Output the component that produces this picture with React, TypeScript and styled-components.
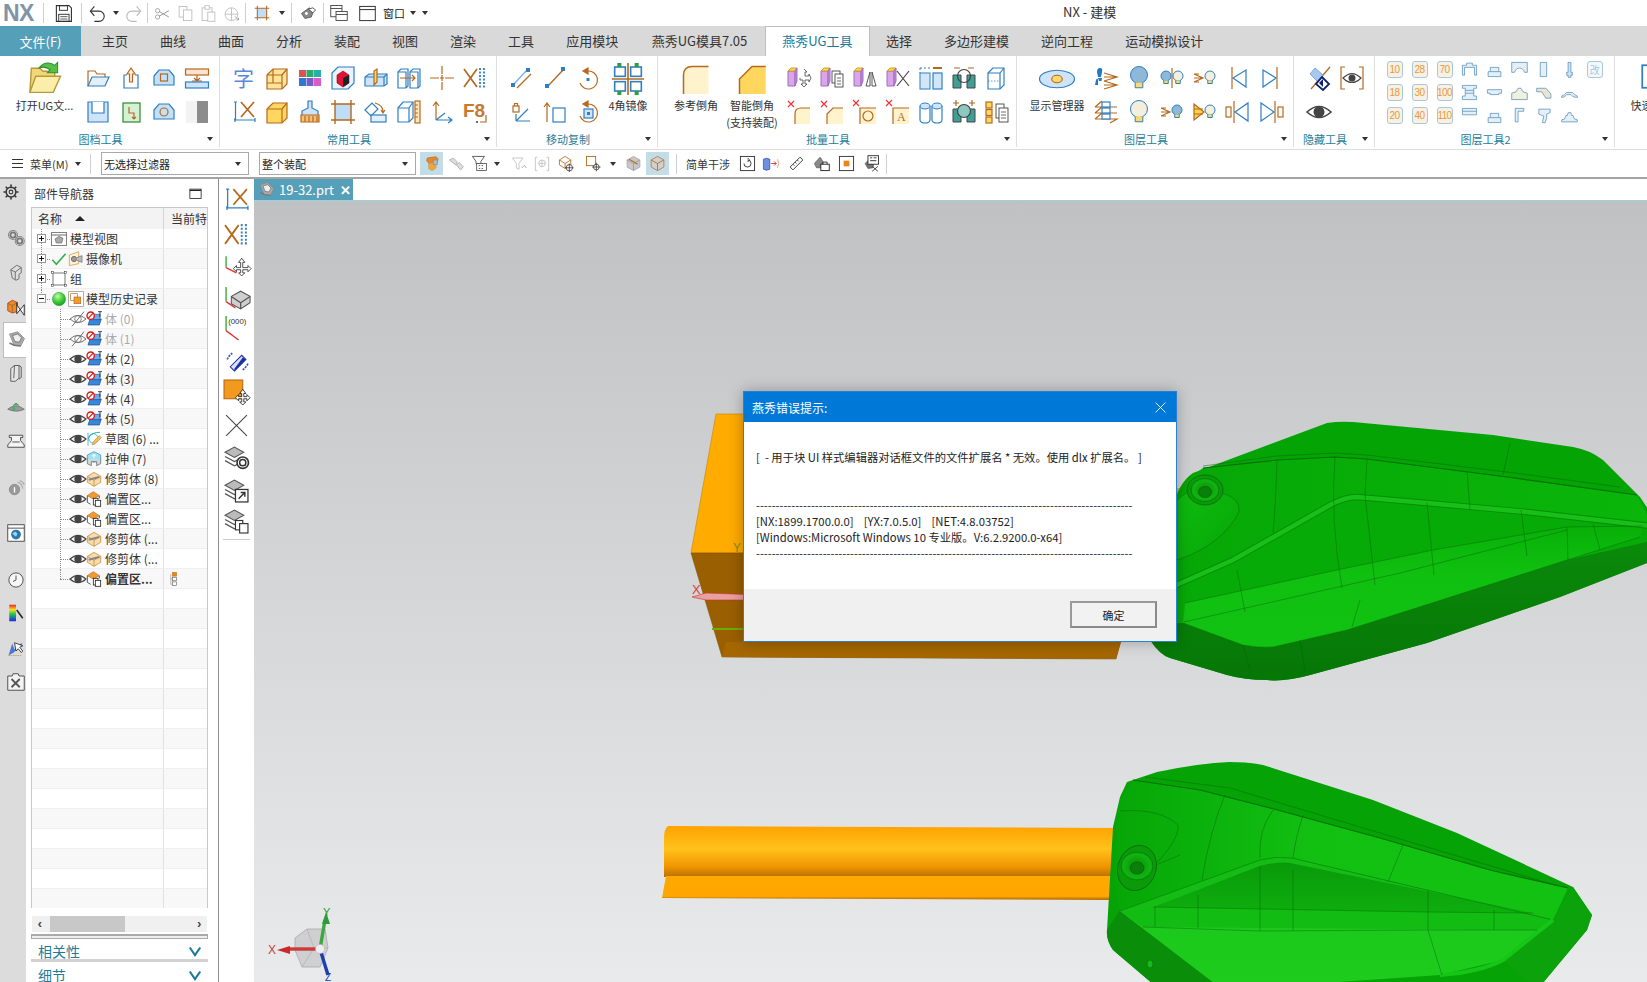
import React from "react";
import styled, { createGlobalStyle } from "styled-components";

const Global = createGlobalStyle`
  html, body { margin: 0; padding: 0; background: #fff; overflow: hidden; }
  * { box-sizing: border-box; }
  body { font-family: "Noto Sans CJK SC", "Liberation Sans", sans-serif; color: #333; }
`;

const B = "#2f7fc1", L = "#cfe4f8", O = "#b5691f", Y = "#ffd966", K = "#444", T = "#3f9f95", Pu = "#d9a6e8", GR = "#9a9a9a";
const P = (d: string, s: string = "none", f: string = "none", w: number = 1.2, dash?: string) => (
  <path d={d} stroke={s} fill={f} strokeWidth={w} strokeDasharray={dash} />
);
const C = (x: number, y: number, r: number, s: string = "none", f: string = "none", w: number = 1.2) => (
  <circle cx={x} cy={y} r={r} stroke={s} fill={f} strokeWidth={w} />
);
const Re = (x: number, y: number, w: number, h: number, s: string = "none", f: string = "none", sw: number = 1.2) => (
  <rect x={x} y={y} width={w} height={h} stroke={s} fill={f} strokeWidth={sw} />
);
const bulb = (x: number, y: number, r: number, f: string) => (
  <>
    {C(x, y, r, B, f, 1)}
    {P(`M${x - r * 0.45} ${y + r * 0.9}V${y + r * 1.5}h${r * 0.9}V${y + r * 0.9}`, B, Y, 1)}
  </>
);
const arrows3 = P("M1 8l9 4-9 4M1 12h9M1 8h5M1 16h5", O);
const purple = (
  <>
    {P("M1 5h7v15H1z", "#a06cc0", Pu, 1)}
    {P("M1 5l3-3h6l-2 3z", "#c9a227", "#ffd94a", 1)}
    {P("M8 5l2-3v13l-2 5z", "#a06cc0", "#c78fdc", 1)}
  </>
);
const xm = (x: number, y: number) => P(`M${x} ${y}l6 6m0-6l-6 6`, "#e33", "none", 1.2);
const profile = (d: string, f: string = "#e4eff8") => P(d, "#5a93bf", f, 1.1);

const ICONS: Record<string, React.ReactNode> = {
  bigOpen: <>
    {P("M3 5h6l2 2h8v4H7L2 21z", "#b89a3a", "#f0d878", 1)}
    {P("M6 10.5h17l-5 11H2z", "#b89a3a", "#fbeeaa", 1)}
    {P("M8 5Q13 -1 19 3l2-2v7h-7l2-2Q12 3 8 5z", "#2c8f2c", "#56bf45", 0.7)}
  </>,
  folderOpen: <>{P("M2 20V5h7l2 3h8v3", O)}{P("M2 20l4-9h17l-4 9z", B, "#e3f0fb")}</>,
  upload: <>{P("M8 9H5v13h14V9h-3", B)}{P("M12 2l4 6h-2.5v8h-3V8H8z", O, "#fdeedd")}</>,
  camBox: <>{P("M2 10l5-6h10l5 6v9H2z", B, "#c4e0f7")}{Re(8.5, 8, 7, 7, O)}</>,
  drawer: <>{Re(0.5, 3, 23, 6, O, "#fae3cf")}{P("M12 9v6M9 12l3 3 3-3M7 15h10", O)}{Re(0.5, 16, 23, 6, B, L)}</>,
  save: <>{P("M2 2h20v20H2z", B, L)}{P("M6 2v11h12V2", B, "#fff")}</>,
  step: <>{Re(4, 3, 17, 19, "#2b8a2b", "#d6f0d6")}{P("M10 7v6h5v6m-2-2l2 2 2-2", O)}</>,
  camera: <>{P("M2 10l5-6h10l5 6v9H2z", B, "#c4e0f7")}{C(12, 12, 4, O)}</>,
  grayBar: <>{Re(1, 1, 11, 22, "none", "#f3f3f3")}{Re(12, 1, 11, 22, "none", "#8c8c8c")}</>,
  zi: <text x="1" y="20" fontSize="21" fill="#5b86e0" fontFamily="Noto Sans CJK SC">字</text>,
  boxWire: <>{P("M2 9l6-6h14v15l-5 5H2z", O, "#ffe49a")}{P("M2 9h15v14M17 9l5-6M8 3v14H2M8 17l9 0", O)}</>,
  colors: <>{Re(1, 4, 7, 7, "none", "#d9534f")}{Re(8.5, 4, 7, 7, "none", "#2ea86b")}{Re(16, 4, 7, 7, "none", "#28b0a8")}{Re(1, 12, 7, 8, "none", "#2f78d6")}{Re(8.5, 12, 7, 8, "none", "#7a5cc9")}{Re(16, 12, 7, 8, "none", "#d85cc8")}</>,
  redCube: <>{P("M1 7l6-6h16v16l-6 6H1z", B, "#e8f3fc")}{P("M6 9l6-4 6 4v8l-6 4-6-4z", "#900", "#e0123a", 0.6)}{P("M12 12v9l6-4V9z", "none", "#222")}</>,
  slice: <>{P("M1 11l4-3h18v10l-3 2H1z", B, L)}{P("M1 11h19v9M20 11l3-3", B)}{P("M10 5l3-2v13l-3 3z", O, Y)}</>,
  pushBoxes: <>{P("M1 6l3-3h7v17l-2 2H1z", B, "#fff")}{P("M13 6l3-3h7v17l-2 2h-8z", B, "#fff")}{P("M1 6h8v16M13 6h8v16", B)}{P("M3 12h15m-3-3l3 3-3 3", O)}</>,
  crossH: <>{P("M0 12h9M15 12h9M12 0v8M12 16v8M12 9v6M10 12h4", O)}</>,
  xDots: <>{P("M1 3l13 18M14 3L1 21", O, "none", 1.7)}{P("M17 2v20M21 2v20", B, "none", 1.8, "2 1.5")}</>,
  dimX: <>{P("M2 2h3M3.5 2v18M2 20h21M23 18v4M3 18v4", B)}{P("M9 2l13 15M22 2L9 17", O, "none", 1.7)}</>,
  yCube: <>{P("M2 9l6-6h14v15l-5 5H2z", O, "#ffd75e")}{P("M2 9h15v14M17 9l5-6", O)}</>,
  brush: <>{P("M10 1h4v7l6 3v5H4v-5l6-3z", B, L)}{P("M3 15h18v7H3z", O, "#f3c27a")}{P("M7 16v6M11 16v6M15 16v6M19 16v6", O)}</>,
  crop: <>{Re(4, 4, 16, 16, "none", "#bfdcf8")}{P("M0 4h24M0 20h24M4 0v24M20 0v24", O, "none", 1.4)}</>,
  rot: <>{P("M1 10l7-7 6 6-7 7z", B, "#fff")}{P("M11 3q8 2 8 9m-2-2l2 3 2-3", O)}{Re(7, 15, 15, 7, B, "#e3f0fb")}</>,
  ruler: <>{P("M1 8l5-6h10v16l-4 4H1z", B, "#fff")}{P("M1 8h11v14M12 8l4-6", B)}{Re(18, 1, 5, 22, O, "#ffe8bd")}{P("M18 5h3M18 9h3M18 13h3M18 17h3", O)}</>,
  axes: <>{P("M6 3v17M3 6l3-4 3 4", O)}{P("M6 20L21 20M18 17l4 3-4 3M6 20l9-7", B)}</>,
  f8: <><text x="0" y="17" fontSize="19" fontWeight="700" fill="#c67a2c" fontFamily="Liberation Sans">F8</text>{P("M23 15v7h-6", O)}{P("M13 21l2 2m0-2l-2 2", K, "none", 0.8)}</>,
  lineB: <>{P("M3 19L17 4", "#7db8ea", "none", 1.6)}{P("M7 22L21 8", O, "none", 1.3)}{Re(1, 17, 4, 4, "none", B)}{Re(16, 2, 4, 4, "none", B)}</>,
  lineO: <>{P("M4 21L20 4", O, "none", 1.4)}{Re(2, 18, 4, 4, "none", B)}{Re(18, 1, 4, 4, "none", B)}</>,
  rotDot: <>{P("M12 5a9 9 0 1 1-8 12", O)}{P("M12 2v6l-5-3z", O, O)}{Re(10.5, 12, 3, 3, "none", B)}</>,
  lockAx: <>{P("M6 21L20 21M6 21V14M6 21l12-12", B)}{Re(3, 6, 6, 6, O)}{P("M4.5 6V3.5h3V6", O)}</>,
  upBox: <>{P("M4 22V3M1 7l3-4 3 4", O)}{Re(10, 8, 12, 14, B)}</>,
  rotSq: <>{P("M12 4a9 9 0 1 1-8 12", O)}{P("M12 1v6l-5-3z", O, O)}{Re(8, 9, 9, 9, B, L)}{Re(11, 12, 3, 3, "none", B)}</>,
  mirror4: <>{P("M12 0v24M0 12h24", O)}{Re(2, 3, 8, 7, B, "#fff")}{Re(14, 3, 8, 7, B, "#fff")}{Re(2, 14, 8, 7, B, "#fff")}{Re(14, 14, 8, 7, B, "#fff")}{Re(4, 0, 3, 3, "none", "#2c9c40")}{Re(17, 0, 3, 3, "none", "#2c9c40")}{Re(4, 21, 3, 3, "none", "#2c9c40")}{Re(17, 21, 3, 3, "none", "#2c9c40")}</>,
  fillet: <>{P("M2 24V9Q2 2 9 2H22V24z", "none", "#fff3cd")}{P("M2 24V9Q2 2 9 2H22", O)}</>,
  chamfer: <>{P("M2 24V12L12 2H23V24z", "none", "#ffd75e")}{P("M2 24V12L12 2H23", O)}</>,
  pMove: <>{purple}{P("M17 3l3 3h-2v4h4V8l2 4-2 4v-2h-4v4h2l-3 3-3-3h2v-4h-3v-2", K, "#fff", 0.8)}</>,
  pCopy: <>{purple}{Re(12, 5, 8, 12, K, "#fff", 0.9)}{Re(15, 8, 8, 13, K, "#fff", 0.9)}{P("M17 12h4M17 15h4M17 18h4", K, "none", 0.8)}</>,
  pMir: <>{purple}{P("M13 20l4-14v14zM23 20l-4-14v14z", K, "#fff", 0.9)}</>,
  pX: <>{purple}{P("M11 5l12 15M23 5L11 20", K, "none", 1.2)}</>,
  cols: <>{Re(1, 7, 10, 16, "#4b93cf", "#d3e6f7")}{Re(14, 7, 9, 16, B, "#d3e6f7")}{P("M1 2h10", B, "none", 1, "2 2")}{P("M1 2v5", B, "none", 1, "2 2")}{P("M14 2h9", O, "none", 2)}</>,
  gate: <>{P("M1 9h8v13H1zM15 9h8v13h-8z", K, T, 1)}{C(12, 10, 6.5, K, "none", 1.2)}{P("M2 2h6M16 2h6", O)}</>,
  dotBox: <>{P("M3 7l5-5h11v17l-4 4H3z", B, "#fff")}{P("M3 7h12v16M15 7l4-5", B)}{P("M3 15h12", B, "none", 0.8, "1.5 1.5")}</>,
  xFil: <>{xm(1, 1)}{P("M8 24V14q0-6 6-6h9v16z", "none", "#fff3cd")}{P("M8 24V14q0-6 6-6h9", O)}</>,
  xFil2: <>{xm(1, 1)}{P("M7 24V14l6-6h10v16z", "none", "#fff3cd")}{P("M7 24V14l6-6h10", O)}</>,
  xCir: <>{xm(0, 0)}{P("M7 24V8h16v16z", "none", "#fff3cd")}{P("M7 24V8h16", O)}{C(15, 16, 5, O)}</>,
  xA: <>{xm(0, 0)}{P("M7 24V8h16v16z", "none", "#fff3cd")}{P("M7 24V8h16", O)}<text x="11" y="21" fontSize="12" fill={O} fontFamily="Liberation Serif">A</text></>,
  cyl: <>{P("M1 6v14a5 3 0 0 0 10 0V6", B)}{P("M13 6v14a5 3 0 0 0 10 0V6", B)}<ellipse cx="6" cy="6" rx="5" ry="3" stroke={B} fill={L} /><ellipse cx="18" cy="6" rx="5" ry="3" stroke={B} fill={L} /></>,
  gate2: <>{P("M1 9h8v13H1zM15 9h8v13h-8z", K, T, 1)}{C(12, 11, 6.5, K, "#8cc8be", 1.2)}{P("M1 3h6M4 0v6M17 3h6M20 0v6", O)}</>,
  oCopy: <>{Re(1, 2, 6, 6, O, Y)}{Re(1, 9.5, 6, 6, O, Y)}{Re(1, 17, 6, 6, O, Y)}{Re(11, 4, 8, 14, K, "#fff", 0.9)}{Re(14, 8, 9, 14, K, "#fff", 0.9)}{P("M16 12h5M16 15h5M16 18h5", K, "none", 0.8)}</>,
  disp: <><ellipse cx="12" cy="12" rx="15" ry="7.5" stroke={B} fill={L} /><ellipse cx="12" cy="12" rx="4.5" ry="3.2" stroke={O} fill={Y} /></>,
  feet: <>{P("M6 2q3 0 2 4l-1 5H4l-1-5q0-4 3-4zM4 12h4l-.5 3H5z M2 14q1-2 2-1v6H1z", "none", "#1f78c8")}{P("M10 7l13 4-13 4M10 11h13M10 15l13 4-13 4M10 19h12", O)}</>,
  bB: bulb(12, 9, 8.5, "#8fb8d8"),
  bW: bulb(12, 9, 8.5, "#f3efdc"),
  bSplit: <>{bulb(6, 10, 5, "#8fb8d8")}{P("M12 2v20", O)}{bulb(18, 10, 5, "#f3efdc")}</>,
  aBW: <>{arrows3}{bulb(17, 10, 5, "#f3efdc")}</>,
  aBB: <>{arrows3}{bulb(17, 10, 5, "#8fb8d8")}</>,
  aYB: <>{P("M1 4l10 8-10 8z", O, "#ffd24d")}{P("M1 9h9M1 14h9", O)}{bulb(17, 10, 5, "#f3efdc")}</>,
  triL: <>{P("M6 1v22", O)}{P("M20 4v17L7 12z", B, "#fff")}</>,
  triR: <>{P("M18 1v22", O)}{P("M4 4v17l13-9z", B, "#fff")}</>,
  layers: <>{P("M1 7l7-6M23 7H1M1 13h22M1 19h22l-7 4M1 19l7-6M1 13l7-6", O)}{Re(8, 2, 8, 5, B, "#fff")}{Re(8, 8, 8, 5, B, "#fff")}{Re(8, 14, 8, 5, B, "#fff")}</>,
  rtriL: <>{Re(0, 7, 5, 10, O, "#fff")}{P("M8 1v22", O)}{P("M22 3v18L9 12z", B, "#fff")}</>,
  rtriR: <>{Re(19, 7, 5, 10, O, "#fff")}{P("M16 1v22", O)}{P("M2 3v18l13-9z", B, "#fff")}</>,
  hideD: <>{P("M4 23L23 1", O, "none", 1.3)}{P("M8 2l8 7-6 6-7-7z", "#7fa7e0", "#a9c6ef", 1)}{P("M15 11l7 7-6 6-7-6z", "#10206b", "#fff", 1.8)}{P("M16 13v8l-4-4z", "none", "#10206b")}</>,
  eyeBr: <>{P("M5 1H1v22h4M19 1h4v22h-4", O)}{P("M3 12q9-9 18 0q-9 9-18 0z", K, "#fff")}{C(12, 12, 3.5, "none", K)}</>,
  eye: <>{P("M0 12q12-11 24 0q-12 11-24 0z", K, "#fff", 1.6)}{C(12, 12, 5.5, "none", K)}</>,
  eyeOff: <>{P("M0 12q12-11 24 0q-12 11-24 0z", "#666", "#fff", 1.4)}{C(12, 12, 5, "#666", "#fff", 1.2)}{P("M3 23L21 1", "#666", "none", 1.4)}</>,
  flat: <>{P("M2 4l11-3 9 9-5 10-9-1z", "#888", "#aaa", 1)}{P("M6 6l7-2 5 5-3 6-6-1z", "#666", "#eee", 1)}{P("M2 16l6 3 9 1", "#777", "none", 2)}</>,
  mv: <>{P("M2 4v11", "#3a3", "none", 1.3)}{P("M2 15l10 5", "#d33", "none", 1.3)}{P("M17 6l3 4h-2v5h5v-2l3 3-3 3v-2h-5v3h2l-3 3-3-3h2v-3h-4v2l-3-3 3-3v2h4v-5h-2z", "#333", "#fff", 0.8)}</>,
  axCube: <>{P("M2 1v14", "#3a3", "none", 1.3)}{P("M2 15l9 6", "#d33", "none", 1.3)}{P("M7 10l9-5 9 5v6l-9 6-9-5z", "#555", "#cfcfcf", 1)}{P("M7 10l9 6 9-6M16 16v6", "#555")}</>,
  axNum: <>{P("M2 1v14", "#3a3", "none", 1.3)}{P("M2 15l12 9", "#d33", "none", 1.3)}<text x="4" y="9" fontSize="7.5" fill="#333" fontFamily="Liberation Sans">(000)</text></>,
  flip: <>{P("M6 18L17 7l4 4-11 11z", "#1a2ea8", "#d8e2fb", 1)}{P("M10 20L18 9l3 2-11 11z", "none", "#1a2ea8")}{P("M3 11q2-4 5-6M23 15q-2 4-5 6", "#2d54d6", "none", 1.6, "2 1")}</>,
  orMv: <>{Re(0, 0, 18, 18, "#b7660f", "#f29a1f", 1)}{P("M18 9l3 4h-2v3h3v-2l3 3-3 3v-2h-3v3h2l-3 3-3-3h2v-3h-3v2l-3-3 3-3v2h3v-3h-2z", "#000", "#fff", 0.7)}</>,
  thinX: P("M2 2l20 20M22 2L2 22", "#444", "none", 1),
  thinXW: P("M3 3l18 18M21 3L3 21", "#fff", "none", 1.6),
  layGear: <>{P("M1 7l9-5 9 5-9 5z", "#555", "#bbb", 1)}{P("M1 11l9 5 3-1.5M1 15l9 5 3-1.5", "#555", "none", 1.2)}{C(18, 17, 3, "#333", "#fff", 1.4)}{C(18, 17, 5.5, "#333", "none", 1.6)}</>,
  layEdit: <>{P("M1 7l9-5 9 5-9 5z", "#555", "#bbb", 1)}{P("M1 11l9 5 3-1.5M1 15l9 5 3-1.5", "#555", "none", 1.2)}{Re(11, 11, 12, 12, "#333", "#fff", 1.2)}{P("M14 20l6-6m-4 0h4v4", "#333", "none", 1.4)}</>,
  layCopy: <>{P("M1 7l9-5 9 5-9 5z", "#555", "#bbb", 1)}{P("M1 11l9 5 3-1.5M1 15l9 5 3-1.5", "#555", "none", 1.2)}{Re(11, 12, 7, 9, "#333", "#fff", 1.1)}{Re(15, 15, 8, 9, "#333", "#fff", 1.1)}</>,
  gear: <>{C(12, 12, 6.5, "#333", "#ddd", 2)}{C(12, 12, 2.5, "#333", "#ddd", 1.4)}{P("M12 2v3M12 19v3M2 12h3M19 12h3M5 5l2 2M17 17l2 2M19 5l-2 2M7 17l-2 2", "#333", "none", 2.2)}</>,
  gears: <>{C(8, 8, 3.5, "#777", "#ddd", 2.4)}{C(17, 16, 3.5, "#777", "#ddd", 2.4)}{C(8, 8, 6, "#888", "none", 1.4)}{C(17, 16, 6, "#888", "none", 1.4)}</>,
  block: <>{P("M5 9l8-6 6 3v7l-3 2v6l-4 2-5-3z", "#666", "#ddd", 1.2)}{P("M5 9l6 3 8-6M11 12v10", "#666")}</>,
  orBlock: <>{P("M1 7l6-4 7 3v12l-7 2-6-3z", "#933", "#f28a1f", 1)}{P("M1 7l6 3 7-4M7 10v10", "#963")}{P("M13 6v15l10-12v14L13 9", "#222", "#fff", 1.2)}</>,
  book: <>{P("M5 6l5-4h6v17l-5 4H5z", "#555", "#e6e6e6", 1.2)}{P("M10 2l-1 17M16 2l3 2v14l-3 2", "#555")}</>,
  plant: <>{P("M1 15q10-9 22 0q-10 5-22 0z", "#666", "#9a9a9a", 1)}{P("M8 10l4-3 4 3", "#2a8a2a", "#6a6", 1)}{C(9, 14, 2, "none", "#3b6")}</>,
  press: <>{P("M3 3h18v3h-3v4l5 6v3H1v-3l5-6V6H3z", "#444", "#f4f4f4", 1.2)}{P("M7 12h10", "#444")}</>,
  info: <>{C(10, 14, 7, "#888", "#999", 1)}{P("M10 11v7", "#fff", "none", 1.8)}{P("M14 4q6 2 7 9M17 2q5 2 6 6", "#aaa", "none", 1.5)}</>,
  web: <>{Re(1, 1, 22, 22, "#444", "#fff", 1.2)}{P("M1 5.5h22", "#444")}{C(12, 14, 6.5, "none", "#2a78ab")}{P("M7 13l4-3 3 3-2 4z", "none", "#9cd4f5")}</>,
  clock: <>{C(12, 12, 9.5, "#444", "#f6f6f6", 1.2)}{P("M12 6v6l-4 2", "#444")}</>,
  rainbow: <><defs><linearGradient id="rb" x1="0" x2="0" y1="0" y2="1"><stop offset="0" stopColor="#e22" /><stop offset=".3" stopColor="#fd2" /><stop offset=".55" stopColor="#2c4" /><stop offset="1" stopColor="#22e" /></linearGradient></defs>{Re(3, 1, 9, 22, "none", "url(#rb)")}{P("M13 8l8 11", "#222", "none", 2)}</>,
  cursor: <>{P("M2 22l5-16 3 8 8-8 3 0-12 12z", "none", "#4b78d8")}{P("M10 5l11 4-4 2 4 5-2 2-4-5-3 3z", "#111", "#fff", 1)}{P("M2 22h18", "#b89a3a", "none", 1, "2 1")}</>,
  tool: <>{P("M1 4h6l1-3h7l1 3h7v19H1z", "#444", "#f3f3f3", 1.2)}{P("M6 8l11 11M17 8L6 19", "#555", "none", 2.4)}</>,
  nxSave: <>{P("M3 2h16l3 3v17H3z", "#333", "#fff", 1.4)}{Re(7, 2, 10, 6, "#333", "none", 1.2)}{Re(6, 13, 13, 9, "#333", "none", 1.2)}{P("M8 16h9M8 19h9", "#333", "none", 1)}</>,
  undo: <>{P("M3 9h11a6.5 6.5 0 0 1 0 13H8", "#333", "none", 1.4)}{P("M8 3L3 9l5 6", "#333", "none", 1.4)}</>,
  redo: <>{P("M21 9H10a6.5 6.5 0 0 0 0 13h6", "#bbb", "none", 1.4)}{P("M16 3l5 6-5 6", "#bbb", "none", 1.4)}</>,
  cut: <>{C(5, 8, 3, GR)}{C(5, 17, 3, GR)}{P("M7 9l14 8M7 16l14-8", GR, "none", 1.4)}</>,
  copy: <>{Re(3, 2, 11, 15, "#bbb", "#fff")}{Re(9, 7, 12, 15, "#bbb", "#fff")}</>,
  paste: <>{Re(3, 4, 14, 18, "#bbb", "#fff")}{Re(7, 1, 6, 5, "#bbb", "#fff")}{Re(11, 10, 10, 13, "#bbb", "#fff")}</>,
  pasteS: <>{C(12, 13, 9, "#bbb", "#fff")}{P("M3 13h18M12 4v18", "#bbb")}{P("M17 16l5 5m-3 0h3v-3", GR)}</>,
  cropQ: <>{Re(5, 5, 14, 14, "none", "#bfdcf8")}{P("M1 5h22M1 19h22M5 1v22M19 1v22", O, "none", 1.6)}</>,
  finder: <>{P("M2 12l11-8 6 5-3 8-9 2z", "#444", "#888", 1)}{P("M12 6l6 5 4-4-4-3z", "#444", "#fff", 1.2)}{C(9, 12, 2, "none", "#fff")}</>,
  winA: <>{Re(1, 2, 15, 15, "#444", "#fff", 1.2)}{P("M1 6h15", "#444", "none", 1.2)}{Re(8, 10, 15, 12, "#444", "#fff", 1.2)}{P("M8 14h15", "#444", "none", 1.2)}</>,
  winB: <>{Re(1, 2, 22, 20, "#333", "#fff", 1.4)}{P("M1 6.5h22", "#333", "none", 1.4)}</>,
  sel: <>{P("M5 3l13-2 3 3-1 6-11 3-5-6z", "#b5691f", "#e48a2a", 1)}{P("M7 12l11-3v9l-6 4-5-3z", "#aa6", "#f2a33a", 1)}{P("M14 6h6v7h-6z", "#888", "#bbb", 1)}</>,
  gDot: <>{P("M2 6l6-3 6 6-3 4z", GR, "#ddd", 1)}{P("M12 13l5-3 6 6-4 5z", GR, "#ddd", 1)}</>,
  funnel: <>{P("M2 2h17l-5 7v3h-7V9z", "#444", "#fff", 1.2)}{Re(8, 12, 14, 10, "#444", "#fff", 1.1)}{P("M11 15h2M15 15h2M11 19h2M15 19h2", "#444")}</>,
  funnelG: <>{P("M2 3h16l-6 8v9l-4-2v-7z", "#bbb", "#fff")}{P("M16 18l4-4 3 4", GR)}</>,
  brkG: <>{P("M5 2H2v20h3M19 2h3v20h-3", "#bbb")}{C(12, 11, 5, "#bbb")}{P("M7 11h10M12 6v10", "#bbb")}</>,
  boxPlus: <>{P("M2 7l8-5 8 5v7l-8 5-8-5z", O, "#fff")}{P("M2 7l8 5 8-5M10 12v7", O)}{C(16, 18, 4.5, "#222", "#fff", 1)}{P("M10 18h12M16 12v12", "#222", "none", 1)}</>,
  sqPlus: <>{Re(2, 2, 13, 13, O, "#fff", 1.3)}{C(16, 17, 4, "#222", "#fff", 1)}{P("M10 17h12M16 11v12", "#222", "none", 1)}</>,
  shadeA: <>{P("M3 7l9-5 9 5v10l-9 5-9-5z", GR, "#c8c8c8", 1)}{P("M3 7l9 5 9-5M12 12v10", GR)}{P("M6 6l12 7", O, "none", 1.5)}</>,
  shadeB: <>{P("M3 7l9-5 9 5v10l-9 5-9-5z", O, "#d0d0d0", 1)}{P("M3 7l9 5 9-5M12 12v10", O)}</>,
  refresh: <>{Re(2, 2, 20, 20, "#333", "#fff", 1.3)}{P("M7 12a5 5 0 1 0 5-5", "#333", "none", 1.3)}{P("M12 4l3 3-3 3", "#333", "none", 1.2)}</>,
  clash: <>{P("M2 6v14q4 3 9 0V6q-4-3-9 0z", "#2448b8", "#6f8fe0", 1)}{P("M13 12h7m-3-3l3 3-3 3", "#c33", "none", 1.3)}{P("M22 6q3 6 0 12", "#d84", "none", 1)}</>,
  measure: <>{P("M3 17L17 3l4 4L7 21z", "#333", "#fff", 1.3)}{P("M7 13l2 2M10 10l2 2M13 7l2 2", "#333")}</>,
  lockS: <>{P("M2 12l8-9 4 6-1 9H5z", "#555", "#888", 1)}{Re(11, 13, 12, 9, "#222", "#fff", 1.3)}{P("M14 13v-3h6v3", "#222")}</>,
  oSq: <>{Re(2, 2, 20, 20, "#333", "#fff", 1.3)}{Re(8, 8, 8, 8, "none", "#e8861c")}</>,
  report: <>{P("M3 12l8-8 5 4-2 10-7 1z", "#555", "#777", 1)}{Re(7, 1, 15, 12, "#222", "#fff", 1.2)}{P("M10 4h3M15 4h4M10 8h9", "#222")}{P("M13 16l8 7M21 16l-8 7", "#444", "none", 1.4)}</>,
  maxW: <>{Re(3, 5, 18, 15, "#222", "#fff", 1.3)}{P("M3 7h18", "#222", "none", 2)}</>,
  tv: <>{Re(1, 2, 22, 20, "#444", "#fff", 1)}{P("M1 6h22", "#444")}{P("M6 12l6-4 6 3-2 7H8z", "#666", "#aaa", 1)}</>,
  check: P("M2 13l6 7L22 4", "#30b050", "none", 2.4),
  camT: <>{P("M2 22V6l14-5v18z", "#d08a30", "#fff2d8", 1)}{C(9, 12, 4, "#555", "#999", 1)}{P("M13 10l8-3v10l-8-3", "#666", "#bbb", 1)}</>,
  grp: <>{Re(3, 3, 18, 18, "#333", "#fff", 1)}{Re(1, 1, 3, 3, "#333", "#fff", 0.8)}{Re(20, 1, 3, 3, "#333", "#fff", 0.8)}{Re(1, 20, 3, 3, "#333", "#fff", 0.8)}{Re(20, 20, 3, 3, "#333", "#fff", 0.8)}</>,
  ball: <><defs><radialGradient id="bl" cx=".4" cy=".3" r=".8"><stop offset="0" stopColor="#c8f7a8" /><stop offset=".5" stopColor="#41cf3c" /><stop offset="1" stopColor="#0b8f1c" /></radialGradient></defs>{C(12, 12, 10, "#2a8a3a", "url(#bl)", 0.6)}</>,
  hist: <>{Re(1, 1, 22, 22, "#888", "#fff", 1)}{Re(4, 4, 10, 10, "#b5691f", "#fff", 1)}{Re(9, 9, 10, 10, "#b5691f", "#f29a2f", 1)}</>,
  body: <>{P("M6 12h17l-3 9H3z", "#10509c", "#3a86d8", 1)}{P("M8 5h13v8H8z", "#10509c", "#6fa9e6", 1)}{C(7, 7, 5.5, "#d81818", "#fff", 2)}{P("M3 11l8-8", "#d81818", "none", 1.6)}{P("M18 1h6M21 1v8", "#222", "none", 1.2)}</>,
  sketch: <>{P("M3 11Q10 1 21 2", "#1aa6c2", "none", 1.4)}{C(11, 11, 7, "#1aa6c2", "none", 1.2)}{P("M3 3v19", "#1aa6c2", "none", 1.2)}{P("M9 21l2-5 9-9 3 3-9 9z", "#a86", "#f6c04a", 1)}</>,
  extr: <>{P("M12 1l10 5v6l-10 5L2 12V6z", "#1a8fb8", "#9fe0f2", 1)}{P("M2 12v7l6 3v-6h8v6l6-3v-7", "#555", "#cfd8dc", 1)}{P("M12 5v6M9 8l3-3 3 3", "#fff", "none", 1.5)}</>,
  trim: <>{P("M2 8l10-6 10 6v9l-10 6-10-6z", "#d08a30", "#f7dcb0", 1.2)}{P("M2 8l10 6 10-6M12 14v9", "#d08a30")}{P("M4 13l16-4", "#888", "none", 3)}</>,
  offs: <>{P("M2 7l9-6 9 6-9 5z", "#b5691f", "#f29a2f", 1)}{P("M2 7v10l5 3M20 7v4", "#333", "none", 1.2)}{Re(11, 11, 7, 10, "#222", "#fff", 1.2)}{Re(14, 14, 8, 9, "#222", "#fff", 1.2)}</>,
  dep: <>{Re(6, 1, 7, 6, "#c06a14", "#e8861c", 1)}{Re(6, 9, 7, 6, "#555", "#fff", 1)}{Re(6, 17, 7, 6, "#555", "#fff", 1)}{P("M3 4v17h3M3 12h3", "#777", "none", 0.8)}</>,
  p1: profile("M2 20V6h6V3h8v3h6v14h-3V9H5v11z"),
  p2: profile("M3 22v-7h3v-6h12v6h3v7zM6 15h12"),
  p3: profile("M1 2h22v14h-4q-2-6-7-6t-7 6H1z"),
  p4: profile("M6 2h9v20H6z"),
  p5: profile("M10 2h4v14h2v4h-2v3h-4v-3H8v-4h2z", "#cfe3f3"),
  p6: profile("M2 2h20v4h-4v11h4v5H2v-5h4V6H2zM6 9h12M6 13h12"),
  p7: profile("M2 8h20v5h-4v2H6v-2H2z"),
  p8: profile("M1 22v-9l6-2 3-5h4l3 5 6 2v9z", "#f1efdf"),
  p9: profile("M1 6h13l7 8v6h-7l-6-9H1z", "#e9e5d2"),
  p10: profile("M1 17l4-2 3-3h8l3 3 4 2v2l-6-1-3-3H8l-3 3-4 1z"),
  p11: profile("M2 2h20v9H2zM2 6h20"),
  p12: profile("M6 2h12v4h-8v15H6z"),
  p13: profile("M4 3h16v5l-5 2v5l-2 7H9l2-9-7-3z"),
  p14: profile("M1 18l4-1 2-5h2l1-4h4l1 4h2l2 5 4 1v3H1z"),
  p15: profile("M3 22v-7h3V9h12v6h3v7zM6 15h12"),
  quick: <>{Re(9, 1, 20, 18, B, "#fff", 1.4)}</>,
};

const Svg = styled.svg<{ $s: number }>`
  width: ${(p) => p.$s}px;
  height: ${(p) => p.$s}px;
  flex: none;
  display: block;
  overflow: visible;
`;
const Ico = ({ n, s = 24 }: { n: string; s?: number }) => (
  <Svg $s={s} viewBox="0 0 24 24">{ICONS[n]}</Svg>
);

const Page = styled.div`
  width: 1647px;
  height: 982px;
  position: relative;
  overflow: hidden;
  display: flex;
  flex-direction: column;
  background: #fff;
`;

/* ---------- title bar ---------- */
const TitleBar = styled.div`
  height: 26px;
  display: flex;
  align-items: center;
  flex: none;
`;
const QuickBar = styled.div`
  width: 1063px;
  height: 100%;
  display: flex;
  align-items: center;
  padding-left: 3px;
`;
const Logo = styled.span`
  font: 700 23px "Liberation Sans", sans-serif;
  color: #8193a6;
  width: 36px;
  letter-spacing: -0.5px;
`;
const QSep = styled.span<{ $m?: number }>`
  width: 1px;
  height: 20px;
  background: #cfcfcf;
  margin: 0 ${(p) => p.$m ?? 3}px;
  flex: none;
`;
const QBtn = styled.span<{ $w?: number }>`
  width: ${(p) => p.$w ?? 23}px;
  display: flex;
  justify-content: center;
  flex: none;
`;
const Caret = styled.span<{ $w?: number }>`
  width: ${(p) => p.$w ?? 14}px;
  flex: none;
  display: flex;
  justify-content: center;
  &::after {
    content: "";
    border-left: 3.5px solid transparent;
    border-right: 3.5px solid transparent;
    border-top: 4px solid #333;
  }
`;
const WinText = styled.span`
  font-size: 11px;
  width: 26px;
  flex: none;
  white-space: nowrap;
  color: #222;
`;
const TitleText = styled.span`
  font-size: 13px;
  color: #333;
  white-space: nowrap;
  padding-bottom: 3px;
`;

/* ---------- tabs ---------- */
const TabRow = styled.div`
  height: 30px;
  background: #d9d9d9;
  display: flex;
  align-items: stretch;
  flex: none;
`;
const FileTab = styled.div`
  width: 81px;
  margin-right: 5px;
  background: #569fb9;
  color: #fff;
  font-size: 13px;
  display: flex;
  align-items: center;
  justify-content: center;
`;
const Tab = styled.div<{ $active?: boolean; $wide?: boolean }>`
  padding: 0 ${(p) => (p.$wide ? 17.5 : 16)}px 1px;
  display: flex;
  align-items: center;
  font-size: 13px;
  white-space: nowrap;
  color: ${(p) => (p.$active ? "#1a7896" : "#333")};
  background: ${(p) => (p.$active ? "#fff" : "transparent")};
  box-shadow: ${(p) => (p.$active ? "inset 1px 1px 0 #bdbdbd, inset -1px 0 0 #bdbdbd" : "none")};
`;

/* ---------- ribbon ---------- */
const Ribbon = styled.div`
  height: 94px;
  display: flex;
  border-bottom: 1px solid #dcdcdc;
  flex: none;
  overflow: hidden;
`;
const Group = styled.div<{ $w: number; $last?: boolean }>`
  width: ${(p) => p.$w}px;
  flex: none;
  display: flex;
  flex-direction: column;
  padding-top: 5px;
  margin-bottom: 2px;
  border-right: ${(p) => (p.$last ? "none" : "1px solid #dedede")};
`;
const GroupBody = styled.div<{ $pl: number }>`
  height: 70px;
  flex: none;
  display: flex;
  padding-left: ${(p) => p.$pl}px;
`;
const GroupFoot = styled.div`
  height: 16px;
  flex: none;
  display: flex;
  align-items: center;
`;
const GroupName = styled.span`
  flex: 1;
  text-align: center;
  color: #1d7c99;
  font-size: 11px;
`;
const Big = styled.div<{ $w: number; $mr?: number }>`
  width: ${(p) => p.$w}px;
  margin-right: ${(p) => p.$mr ?? 0}px;
  flex: none;
  display: flex;
  flex-direction: column;
  align-items: center;
  font-size: 11px;
  line-height: 17px;
  color: #333;
  white-space: nowrap;
  text-align: center;
`;
const BigIconBox = styled.div`
  height: 35px;
  display: flex;
  align-items: center;
  margin-bottom: 1px;
`;
const Grid = styled.div<{ $cols: number; $cw?: number; $ch?: number; $mt?: number }>`
  display: grid;
  grid-template-columns: repeat(${(p) => p.$cols}, ${(p) => p.$cw ?? 33}px);
  grid-auto-rows: ${(p) => p.$ch ?? 34}px;
  margin-top: ${(p) => p.$mt ?? 0}px;
  flex: none;
`;
const Cell = styled.div`
  display: flex;
  align-items: center;
  justify-content: center;
`;
const NumTile = styled.div`
  width: 16px;
  height: 17px;
  border: 1px solid #a9c8de;
  border-radius: 3px;
  background: #f6f1e2;
  color: #e79a3e;
  font: 10px "Liberation Sans", sans-serif;
  display: flex;
  align-items: center;
  justify-content: center;
  letter-spacing: -0.6px;
  white-space: nowrap;
`;
const WordTile = styled(NumTile)`
  font: 10px "Noto Sans CJK SC", sans-serif;
  color: #a9c8de;
  background: #f4f8fb;
`;

/* ---------- command bar ---------- */
const CmdBar = styled.div`
  height: 29px;
  flex: none;
  display: flex;
  align-items: center;
  border-bottom: 2px solid #a3a3a3;
  padding-left: 12px;
`;
const MenuGlyph = styled.span`
  width: 11px;
  height: 9px;
  border-top: 1px solid #333;
  border-bottom: 1px solid #333;
  margin-right: 7px;
  flex: none;
  background: linear-gradient(#333, #333) center / 100% 1px no-repeat;
`;
const MenuText = styled.span`
  font-size: 11px;
  width: 42px;
  white-space: nowrap;
`;
const Select = styled.div<{ $w: number; $ml?: number; $mr: number }>`
  width: ${(p) => p.$w}px;
  height: 23px;
  margin-left: ${(p) => p.$ml ?? 0}px;
  margin-right: ${(p) => p.$mr}px;
  border: 1px solid #a9a9a9;
  display: flex;
  align-items: center;
  justify-content: space-between;
  padding: 0 5px 0 2px;
  font-size: 11px;
  color: #222;
  flex: none;
`;
const CmdBtn = styled.span<{ $on?: boolean; $w?: number }>`
  width: ${(p) => p.$w ?? 23}px;
  height: 23px;
  flex: none;
  display: flex;
  align-items: center;
  justify-content: center;
  background: ${(p) => (p.$on ? "#c2dde8" : "transparent")};
`;
const CmdLabel = styled.span`
  font-size: 11px;
  color: #333;
  width: 52px;
  padding-left: 2px;
  flex: none;
  white-space: nowrap;
`;

/* ---------- main ---------- */
const Main = styled.div`
  flex: 1;
  display: flex;
  min-height: 0;
`;
const Rail = styled.div`
  width: 26px;
  flex: none;
  background: #dcdcdc;
  display: flex;
  flex-direction: column;
  align-items: flex-end;
  padding-top: 1px;
`;
const RailItem = styled.div<{ $mt: number; $active?: boolean; $head?: boolean }>`
  margin-top: ${(p) => p.$mt}px;
  width: ${(p) => (p.$active ? 23 : 26)}px;
  height: ${(p) => (p.$active ? 36 : 24)}px;
  background: ${(p) => (p.$active ? "#fff" : "transparent")};
  border: ${(p) => (p.$active ? "1px solid #bdbdbd" : "none")};
  border-right: none;
  display: flex;
  align-items: center;
  justify-content: center;
  padding-left: ${(p) => (p.$head ? 0 : p.$active ? 3 : 6)}px;
  padding-right: ${(p) => (p.$head ? 4 : 0)}px;
`;
const Nav = styled.div`
  width: 193px;
  flex: none;
  display: flex;
  flex-direction: column;
  border-right: 1px solid #8f8f8f;
  padding: 0 10px 0 5px;
`;
const NavHead = styled.div`
  height: 28px;
  flex: none;
  display: flex;
  align-items: center;
  justify-content: space-between;
  padding: 0 5px 0 3px;
  font-size: 12px;
  color: #333;
`;
const Table = styled.div`
  height: 701px;
  flex: none;
  border: 1px solid #c9c9c9;
  border-bottom: none;
  overflow: hidden;
`;
const Head = styled.div`
  height: 21px;
  display: flex;
  background: #f3f3f3;
  font-size: 12px;
  color: #333;
`;
const HeadA = styled.div`
  width: 132px;
  border-right: 1px solid #d5d5d5;
  padding-left: 6px;
  display: flex;
  align-items: center;
  gap: 13px;
`;
const HeadB = styled.div`
  flex: 1;
  padding-left: 7px;
  display: flex;
  align-items: center;
  white-space: nowrap;
`;
const SortUp = styled.span`
  border-left: 5px solid transparent;
  border-right: 5px solid transparent;
  border-bottom: 5px solid #222;
`;
const Row = styled.div<{ $odd: boolean }>`
  height: 20px;
  display: flex;
  background: ${(p) => (p.$odd ? "#f8f8f8" : "#fff")};
  border-bottom: 1px solid #efefef;
`;
const RowMain = styled.div`
  width: 132px;
  flex: none;
  display: flex;
  align-items: center;
  border-right: 1px solid #e2e2e2;
  overflow: hidden;
`;
const RowSide = styled.div`
  flex: 1;
  padding-left: 5px;
  display: flex;
  align-items: center;
`;
const Joint = styled.span<{ $w: number; $end?: boolean; $ml?: number; $lineAt: number }>`
  width: ${(p) => p.$w}px;
  margin-left: ${(p) => p.$ml ?? 0}px;
  align-self: stretch;
  flex: none;
  position: relative;
  display: flex;
  align-items: center;
  justify-content: center;
  &::before {
    content: "";
    position: absolute;
    left: ${(p) => p.$lineAt}px;
    top: 0;
    height: ${(p) => (p.$end ? "50%" : "100%")};
    border-left: 1px dotted #8a8a8a;
  }
  &::after {
    content: "";
    position: absolute;
    left: ${(p) => p.$lineAt}px;
    right: 0;
    top: 50%;
    border-top: 1px dotted #8a8a8a;
  }
`;
const Exp = styled.span<{ $minus?: boolean }>`
  width: 9px;
  height: 9px;
  border: 1px solid #999;
  position: relative;
  z-index: 1;
  background-color: #fff;
  background-image: linear-gradient(#111, #111)${(p) => (p.$minus ? "" : ", linear-gradient(#111, #111)")};
  background-size: 5px 1px${(p) => (p.$minus ? "" : ", 1px 5px")};
  background-position: center;
  background-repeat: no-repeat;
`;
const RowIcon = styled.span<{ $w?: number }>`
  width: ${(p) => p.$w ?? 16}px;
  flex: none;
  display: flex;
  justify-content: center;
`;
const RowText = styled.span<{ $dim?: boolean; $bold?: boolean; $ml?: number }>`
  margin-left: ${(p) => p.$ml ?? 3}px;
  font-size: 12px;
  white-space: nowrap;
  color: ${(p) => (p.$dim ? "#aaa" : "#333")};
  font-weight: ${(p) => (p.$bold ? 700 : 400)};
`;
const HScroll = styled.div`
  height: 16px;
  margin: 8px 1px 0;
  background: #f0f0f0;
  display: flex;
  align-items: center;
  justify-content: space-between;
  flex: none;
  padding: 0 4px;
  font: 700 13px "Liberation Mono", monospace;
  color: #444;
`;
const Thumb = styled.span`
  width: 75px;
  height: 16px;
  background: #c8c8c8;
  margin-left: 6px;
  margin-right: auto;
`;
const SplitBar = styled.div`
  height: 5px;
  margin-top: 2px;
  border: 1px solid #a9a9a9;
  border-top-width: 2px;
  background: #eee;
  flex: none;
`;
const Accord = styled.div`
  height: 23px;
  flex: none;
  display: flex;
  align-items: center;
  justify-content: space-between;
  padding: 3px 6px 0 7px;
  font-size: 14px;
  color: #1d7c99;
  border-bottom: 3px solid #d2d2d2;
  &:last-child { border-bottom: none; }
`;
const Strip = styled.div`
  width: 35px;
  flex: none;
  display: flex;
  flex-direction: column;
  align-items: center;
`;
const StripItem = styled.div<{ $mt: number }>`
  margin-top: ${(p) => p.$mt}px;
  height: 26px;
  display: flex;
  align-items: center;
`;
const StripSep = styled.div`
  width: 27px;
  height: 1px;
  background: #ccc;
  margin-top: 6px;
`;
const View = styled.div`
  flex: 1;
  min-width: 0;
  display: flex;
  flex-direction: column;
`;
const DocBar = styled.div`
  height: 22px;
  flex: none;
  display: flex;
  background: #fff;
  border-bottom: 1px solid #9fd0e2;
`;
const DocTab = styled.div`
  width: 99px;
  height: 21px;
  background: #569fb9;
  color: #fff;
  font-size: 13px;
  display: flex;
  align-items: center;
  padding-left: 5px;
  gap: 4px;
  white-space: nowrap;
`;
const DocClose = styled.span`
  font-weight: 700;
  font-size: 13px;
  margin-left: 2px;
`;
const Canvas = styled.div`
  flex: 1;
  min-height: 0;
  background: linear-gradient(#bfc1c3 0%, #d5d6d8 50%, #e9eaeb 100%);
`;
const Scene = styled.svg`
  display: block;
  width: 100%;
  height: 100%;
`;

/* ---------- dialog ---------- */
const Dialog = styled.div`
  position: absolute;
  left: 743px;
  top: 391px;
  width: 434px;
  height: 251px;
  border: 1px solid #2b7fcf;
  background: #fff;
  display: flex;
  flex-direction: column;
  box-shadow: 0 0 14px rgba(0, 0, 0, 0.28);
`;
const DlgTitle = styled.div`
  height: 30px;
  flex: none;
  background: #0078d7;
  color: #fff;
  font-size: 12px;
  display: flex;
  align-items: center;
  justify-content: space-between;
  padding: 0 9px 0 8px;
`;
const DlgBody = styled.div`
  flex: 1;
  padding: 27px 0 0 12px;
  font-size: 11.3px;
  line-height: 16px;
  color: #222;
  white-space: pre;
`;
const DlgGap = styled.div`
  height: 32px;
`;
const DlgFoot = styled.div`
  height: 52px;
  flex: none;
  background: #f0f0f0;
  display: flex;
  justify-content: flex-end;
  align-items: flex-start;
  padding: 12px 19px 0 0;
`;
const DlgBtn = styled.div`
  width: 87px;
  height: 27px;
  border: 2px solid #8a8a8a;
  border-top-color: #9a9a9a;
  border-left-color: #9a9a9a;
  background: #f2f2f2;
  font-size: 11px;
  display: flex;
  align-items: center;
  justify-content: center;
  color: #222;
`;

const Chevron = () => (
  <Svg $s={14} viewBox="0 0 24 24">{P("M3 6l9 13 9-13", "#1d7c99", "none", 3.6)}</Svg>
);

const FootGroup = ({ w, pl, name, last, noArrow, children }: { w: number; pl: number; name: string; last?: boolean; noArrow?: boolean; children: React.ReactNode }) => (
  <Group $w={w} $last={last}>
    <GroupBody $pl={pl}>{children}</GroupBody>
    <GroupFoot>
      <GroupName>{name}</GroupName>
      {!noArrow && <Caret $w={18} />}
    </GroupFoot>
  </Group>
);
const Cells = ({ names, cols }: { names: string[]; cols: number }) => (
  <Grid $cols={cols}>
    {names.map((n, i) => <Cell key={i}>{n && <Ico n={n} />}</Cell>)}
  </Grid>
);
const BigBtn = ({ n, w, s = 34, mr, children }: { n: string; w: number; s?: number; mr?: number; children: React.ReactNode }) => (
  <Big $w={w} $mr={mr}>
    <BigIconBox><Ico n={n} s={s} /></BigIconBox>
    {children}
  </Big>
);

const layer2: (string | number)[] = [10, 28, 70, "p1", "p2", "p3", "p4", "p5", "改", 18, 30, 100, "p6", "p7", "p8", "p9", "p10", "", 20, 40, 110, "p11", "p15", "p12", "p13", "p14", ""];

const tabs = ["主页", "曲线", "曲面", "分析", "装配", "视图", "渲染", "工具", "应用模块", "燕秀UG模具7.05", "燕秀UG工具", "选择", "多边形建模", "逆向工程", "运动模拟设计"];

const rail: [string, number, boolean?][] = [
  ["gear", 0], ["gears", 22], ["block", 10], ["orBlock", 11], ["flat", 3, true], ["book", 3], ["plant", 10], ["press", 11],
  ["info", 22], ["web", 21], ["clock", 23], ["rainbow", 9], ["cursor", 11], ["tool", 10],
];
const strip: [string, number][] = [
  ["dimX", 7], ["xDots", 9], ["mv", 4], ["axCube", 8], ["axNum", 3], ["flip", 7], ["orMv", 6], ["thinX", 7], ["layGear", 6], ["layEdit", 7], ["layCopy", 4],
];

type Item = { level: 0 | 1; icons: string[]; text: string; exp?: string; dim?: boolean; bold?: boolean; side?: string; end?: boolean };
const tree: Item[] = [
  { level: 0, exp: "+", icons: ["tv"], text: "模型视图" },
  { level: 0, exp: "+", icons: ["check", "camT"], text: "摄像机" },
  { level: 0, exp: "+", icons: ["grp"], text: "组" },
  { level: 0, exp: "-", icons: ["ball", "hist"], text: "模型历史记录", end: true },
  { level: 1, icons: ["eyeOff", "body"], text: "体 (0)", dim: true },
  { level: 1, icons: ["eyeOff", "body"], text: "体 (1)", dim: true },
  { level: 1, icons: ["eye", "body"], text: "体 (2)" },
  { level: 1, icons: ["eye", "body"], text: "体 (3)" },
  { level: 1, icons: ["eye", "body"], text: "体 (4)" },
  { level: 1, icons: ["eye", "body"], text: "体 (5)" },
  { level: 1, icons: ["eye", "sketch"], text: "草图 (6) ..." },
  { level: 1, icons: ["eye", "extr"], text: "拉伸 (7)" },
  { level: 1, icons: ["eye", "trim"], text: "修剪体 (8)" },
  { level: 1, icons: ["eye", "offs"], text: "偏置区..." },
  { level: 1, icons: ["eye", "offs"], text: "偏置区..." },
  { level: 1, icons: ["eye", "trim"], text: "修剪体 (..." },
  { level: 1, icons: ["eye", "trim"], text: "修剪体 (..." },
  { level: 1, icons: ["eye", "offs"], text: "偏置区...", bold: true, side: "dep", end: true },
];
const emptyRows = Array.from({ length: 16 }, (_, i) => i);

const wire = { stroke: "#0a5a0a", strokeWidth: 0.5, strokeOpacity: 0.8, fill: "none" };

const ModelScene = () => (
  <Scene viewBox="254 201 1393 781" preserveAspectRatio="none">
    <defs>
      <linearGradient id="rod" x1="0" x2="0" y1="0" y2="1">
        <stop offset="0" stopColor="#ffa200" /><stop offset=".45" stopColor="#ffc21a" /><stop offset=".8" stopColor="#f09400" /><stop offset="1" stopColor="#b87000" />
      </linearGradient>
      <linearGradient id="strip" x1="0" x2="0" y1="0" y2="1">
        <stop offset="0" stopColor="#ffa900" /><stop offset=".85" stopColor="#ffa600" /><stop offset="1" stopColor="#a66200" />
      </linearGradient>
      <linearGradient id="g1mid" x1="0" x2="1" y1="0" y2="0">
        <stop offset="0" stopColor="#06a706" /><stop offset="1" stopColor="#0ab60a" />
      </linearGradient>
      <linearGradient id="g1low" x1="0" x2="0" y1="0" y2="1">
        <stop offset="0" stopColor="#08b008" /><stop offset=".4" stopColor="#10c010" /><stop offset="1" stopColor="#12c212" />
      </linearGradient>
      <linearGradient id="band" x1="0" x2="0" y1="0" y2="1">
        <stop offset="0" stopColor="#0a8a0a" /><stop offset="1" stopColor="#067606" />
      </linearGradient>
      <linearGradient id="g2mid" x1="0" x2="1" y1="0" y2="0">
        <stop offset="0" stopColor="#06a606" /><stop offset=".45" stopColor="#12c012" /><stop offset="1" stopColor="#12c212" />
      </linearGradient>
      <linearGradient id="g2in" x1="0" x2="0" y1="0" y2="1">
        <stop offset="0" stopColor="#099a09" /><stop offset="1" stopColor="#0eae0e" />
      </linearGradient>
      <linearGradient id="g2low" x1="0" x2="0" y1="0" y2="1">
        <stop offset="0" stopColor="#18c518" /><stop offset="1" stopColor="#1ecc1e" />
      </linearGradient>
      <radialGradient id="hole" cx=".5" cy=".5" r=".6">
        <stop offset="0" stopColor="#0a8a0a" /><stop offset=".7" stopColor="#10b410" /><stop offset="1" stopColor="#09960a" />
      </radialGradient>
      <linearGradient id="boss" x1="0" x2="1" y1="0" y2="1">
        <stop offset="0" stopColor="#10bb10" /><stop offset="1" stopColor="#06a606" />
      </linearGradient>
    </defs>

    {/* orange block */}
    <path d="M716 414L691 553H1170V414z" fill="#ffab00" stroke="#c98400" strokeWidth=".6" />
    <path d="M1165 488H1186L1180 502H1165z" fill="#f0a030" />
    <path d="M691 553L722 657L1116 659L1121 640L1170 553z" fill="#9a5f00" stroke="#7d4e00" strokeWidth=".5" />
    <path d="M726 642H1121L1116 659L722 657z" fill="#a56700" />
    <text x="733" y="552" fontSize="12" fill="#8a8a1a" fontFamily="Liberation Sans">Y</text>
    <text x="692" y="594" fontSize="13" fill="#d64040" fontFamily="Liberation Sans">X</text>
    <path d="M692 597L706 593L760 595V600L706 600z" fill="#e9a0a0" stroke="#c33" strokeWidth=".6" />
    <path d="M712 629H760" stroke="#6bb000" strokeWidth="2" />

    {/* green part, upper */}
    <path d="M1150 620L1172 510Q1178 483 1193 473L1327 423Q1340 421 1353 422L1493 435L1573 447Q1590 450 1603 460L1640 497L1652 515V561L1560 597L1427 643L1310 675Q1285 682 1267 680Q1245 680 1227 675L1170 658Q1160 655 1150 640z" fill="#03a403" />
    <path d="M1165 590L1178 500L1192 476L1203 468L1277 460L1335 457L1367 459L1507 477L1637 495L1652 525L1527 512L1427 503L1357 497Q1345 497 1330 505L1233 560z" fill="url(#g1mid)" />
    <path d="M1165 590L1233 560L1330 505Q1345 497 1357 497L1427 503L1527 512L1652 526L1652 541L1567 560L1347 630L1273 647Q1258 648 1243 645L1183 623L1150 625z" fill="#07ab07" />
    <path d="M1150 625L1183 623L1243 645Q1258 648 1273 647L1347 630L1567 560L1652 541V561L1560 597L1427 643L1310 675Q1285 682 1267 680Q1245 680 1227 675L1170 658Q1160 655 1150 640z" fill="url(#band)" />
    <path d="M1185 603L1337 570L1433 550L1567 527L1643 526L1640 537L1567 560L1347 630L1273 647Q1258 648 1243 645L1183 623z" fill="url(#g1low)" />
    <path d="M1165 590L1233 560L1330 505Q1345 497 1357 497L1427 503L1527 512L1652 526" stroke="#0a8a0a" strokeWidth="6.4" fill="none" />
    <path d="M1165 590L1233 560L1330 505Q1345 497 1357 497L1427 503L1527 512L1652 526" stroke="#17c017" strokeWidth="4.6" fill="none" />
    <path d="M1177 560Q1222 545 1239 512Q1241 500 1225 494L1190 490L1177 500z" fill="url(#boss)" stroke="#0a6a0a" strokeWidth=".5" />
    <path d="M1203 468L1277 460L1335 457L1367 459L1507 477L1637 495" stroke="#066e06" strokeWidth="1.2" fill="none" />
    <path d="M1203 466L1277 456L1335 453L1367 455L1507 472L1620 487" stroke="#0a6a0a" strokeWidth=".5" fill="none" />
    <g {...wire}>
      <path d="M1277 460Q1276 500 1273 533M1335 457Q1330 520 1342 588M1367 459L1365 495L1375 585M1467 471L1470 510M1427 503L1434 575M1521 510L1527 556M1567 527L1568 560M1593 524L1600 550" />
      <path d="M1185 603L1337 570L1433 550L1567 527L1643 526M1184 622L1400 573L1567 530M1243 645L1250 670M1300 640L1305 672M1237 570L1245 612M1510 443L1503 475M1360 600L1352 627" />
      <path d="M1183 623L1243 645Q1258 648 1273 647L1347 630L1567 560L1640 537" />
    </g>
    <ellipse cx="1205" cy="490" rx="18" ry="15" fill="#0a9a0a" stroke="#0a6a0a" strokeWidth=".8" />
    <ellipse cx="1205" cy="490" rx="14" ry="11.5" fill="url(#hole)" stroke="#0a6a0a" strokeWidth=".6" />
    <ellipse cx="1205" cy="492" rx="6.5" ry="5.5" fill="#0a7f0a" stroke="#075a07" strokeWidth=".6" />

    {/* orange rod */}
    <path d="M664 840Q664 828 668 826L1120 828V877H664z" fill="url(#rod)" />
    <path d="M666 876H1120V900L662 898z" fill="url(#strip)" />

    {/* green part, lower */}
    <path d="M1127 782L1157 772Q1200 763 1230 762Q1250 762 1263 765L1373 800L1457 833L1573 887L1592 915L1587 930L1537 990H1160L1113 950Q1106 940 1107 930L1113 827L1120 797z" fill="#05a305" />
    <path d="M1120 800L1133 780L1200 790L1270 808L1380 838L1490 870L1568 888L1553 920L1292 858Q1275 856 1260 860L1120 911L1113 880z" fill="url(#g2mid)" />
    <path d="M1107 930L1120 910L1223 990H1160L1113 950Q1106 940 1107 930z" fill="#0a8e0a" />
    <path d="M1573 887L1592 915L1587 930L1537 990L1503 960L1553 920z" fill="#0ca20c" />
    <path d="M1120 911L1292 858L1553 920L1503 960L1440 975L1223 990z" fill="url(#g2low)" />
    <path d="M1120 911L1153 907L1427 912L1533 913L1553 920L1537 930L1143 927z" fill="#12bc12" />
    <path d="M1120 911L1260 860Q1275 856 1292 858L1553 920L1533 913L1295 864Q1285 860 1260 866L1153 907z" fill="#16bc16" />
    <path d="M1153 907L1260 866Q1285 860 1295 864L1533 913L1427 912z" fill="url(#g2in)" />
    <path d="M1120 911L1260 860Q1275 856 1292 858L1553 920" stroke="#0a8a0a" strokeWidth=".8" fill="none" />
    <path d="M1553 920L1503 960Q1480 972 1440 975" stroke="#16c616" strokeWidth="4" fill="none" />
    <path d="M1133 780L1200 790L1270 808L1380 838L1490 870L1568 888" stroke="#087008" strokeWidth="1.2" fill="none" />
    <path d="M1145 777L1230 788L1320 815L1420 845L1555 885" stroke="#0a6a0a" strokeWidth=".5" fill="none" />
    <g {...wire}>
      <path d="M1153 907L1427 912L1533 913M1143 927L1260 931L1430 930L1537 930" />
      <path d="M1225 795Q1210 830 1202 880M1273 810Q1258 830 1260 858M1303 815Q1295 840 1293 858M1403 845L1388 882M1428 890V930M1494 910V930" />
      <path d="M1155 907V927M1198 895V928M1260 866V931M1293 870V931M1428 930L1442 975" />
      <path d="M1120 811Q1160 808 1178 825Q1180 840 1150 870M1120 880L1180 855" />
    </g>
    <ellipse cx="1137" cy="868" rx="19" ry="23" fill="#0a9a0a" stroke="#0a6a0a" strokeWidth=".8" transform="rotate(20 1137 868)" />
    <ellipse cx="1137" cy="866" rx="16" ry="14" fill="url(#hole)" stroke="#0a6a0a" strokeWidth=".6" />
    <ellipse cx="1137" cy="868" rx="7" ry="6" fill="#0a7f0a" stroke="#075a07" strokeWidth=".6" />
    <ellipse cx="1150" cy="964" rx="3" ry="4" fill="#18b818" stroke="#075a07" strokeWidth=".5" />

    {/* triad */}
    <path d="M295 938L307 929H325L328 948L320 967H302L295 950z" fill="#c4c5c7" fillOpacity=".7" stroke="#aaa" strokeWidth=".8" />
    <path d="M307 929L314 948H328M314 948L302 967M295 950H314" stroke="#aaa" strokeWidth=".6" fill="none" />
    <path d="M320 949H288" stroke="#cc3a3a" strokeWidth="3.4" />
    <path d="M277 950L290 946V954z" fill="#cc2a2a" />
    <path d="M320 949L325 920" stroke="#3ea83e" strokeWidth="3.4" />
    <path d="M326 912L322 924H330z" fill="#2e9a3a" />
    <path d="M320 949L328 975" stroke="#1a3fae" strokeWidth="3.4" />
    <circle cx="320" cy="949" r="4.5" fill="#eee" stroke="#bbb" strokeWidth=".6" />
    <text x="268" y="954" fontSize="12" fill="#c94040" fontFamily="Liberation Sans">X</text>
    <text x="323" y="916" fontSize="11" fill="#2e9a3a" fontFamily="Liberation Sans">Y</text>
    <text x="325" y="981" fontSize="10" fill="#1a3fae" fontFamily="Liberation Sans">Z</text>
  </Scene>
);

export default function App() {
  const dash = "-".repeat(96);
  return (
    <Page>
      <Global />
      <TitleBar>
        <QuickBar>
          <Logo>NX</Logo>
          <QSep $m={4} />
          <QBtn $w={30}><Ico n="nxSave" s={19} /></QBtn>
          <QSep $m={3} />
          <QBtn $w={24}><Ico n="undo" s={19} /></QBtn>
          <Caret $w={13} />
          <QBtn $w={22}><Ico n="redo" s={19} /></QBtn>
          <QSep $m={3} />
          <QBtn $w={23}><Ico n="cut" s={17} /></QBtn>
          <QBtn $w={23}><Ico n="copy" s={17} /></QBtn>
          <QBtn $w={23}><Ico n="paste" s={17} /></QBtn>
          <QBtn $w={23}><Ico n="pasteS" s={17} /></QBtn>
          <QSep $m={2} />
          <QBtn $w={28}><Ico n="cropQ" s={16} /></QBtn>
          <Caret $w={12} />
          <QSep $m={3} />
          <QBtn $w={26}><Ico n="finder" s={17} /></QBtn>
          <QSep $m={2} />
          <QBtn $w={26}><Ico n="winA" s={18} /></QBtn>
          <QBtn $w={31}><Ico n="winB" s={17} /></QBtn>
          <WinText>窗口</WinText>
          <Caret $w={8} />
          <Caret $w={16} />
        </QuickBar>
        <TitleText>NX - 建模</TitleText>
      </TitleBar>

      <TabRow>
        <FileTab>文件(F)</FileTab>
        {tabs.map((t) => <Tab key={t} $active={t === "燕秀UG工具"} $wide={t.includes("UG")}>{t}</Tab>)}
      </TabRow>

      <Ribbon>
        <FootGroup w={220} pl={8} name="图档工具">
          <BigBtn n="bigOpen" w={73} s={35}>打开UG文...</BigBtn>
          <Cells cols={4} names={["folderOpen", "upload", "camBox", "drawer", "save", "step", "camera", "grayBar"]} />
        </FootGroup>
        <FootGroup w={277} pl={7} name="常用工具">
          <Cells cols={8} names={["zi", "boxWire", "colors", "redCube", "slice", "pushBoxes", "crossH", "xDots", "dimX", "yCube", "brush", "crop", "rot", "ruler", "axes", "f8"]} />
        </FootGroup>
        <FootGroup w={161} pl={8} name="移动复制">
          <Cells cols={3} names={["lineB", "lineO", "rotDot", "lockAx", "upBox", "rotSq"]} />
          <BigBtn n="mirror4" w={48} s={32}>4角镜像</BigBtn>
        </FootGroup>
        <FootGroup w={359} pl={10} name="批量工具">
          <BigBtn n="fillet" w={56} s={30}>参考倒角</BigBtn>
          <BigBtn n="chamfer" w={56} s={30} mr={2}>智能倒角<br />(支持装配)</BigBtn>
          <Cells cols={7} names={["pMove", "pCopy", "pMir", "pX", "cols", "gate", "dotBox", "xFil", "xFil2", "xCir", "xA", "cyl", "gate2", "oCopy"]} />
        </FootGroup>
        <FootGroup w={277} pl={10} name="图层工具">
          <BigBtn n="disp" w={60} s={28} mr={2}>显示管理器</BigBtn>
          <Cells cols={6} names={["feet", "bB", "bSplit", "aBW", "triL", "triR", "layers", "bW", "aBB", "aYB", "rtriL", "rtriR"]} />
        </FootGroup>
        <FootGroup w={81} pl={8} name="隐藏工具">
          <Cells cols={2} names={["hideD", "eyeBr", "eye", ""]} />
        </FootGroup>
        <FootGroup w={240} pl={7} name="图层工具2">
          <Grid $cols={9} $cw={25} $ch={23} $mt={-3}>
            {layer2.map((v, i) => (
              <Cell key={i}>
                {typeof v === "number" ? <NumTile>{v}</NumTile> : v === "改" ? <WordTile>{v}</WordTile> : v ? <Ico n={v} s={17} /> : null}
              </Cell>
            ))}
          </Grid>
        </FootGroup>
        <FootGroup w={32} pl={0} name="" last noArrow>
          <BigBtn n="quick" w={62} s={30}>快速...</BigBtn>
        </FootGroup>
      </Ribbon>

      <CmdBar>
        <MenuGlyph />
        <MenuText>菜单(M)</MenuText>
        <Caret $w={12} />
        <QSep $m={6} />
        <Select $w={148} $ml={4} $mr={10}>无选择过滤器<Caret $w={10} /></Select>
        <Select $w={157} $mr={4}>整个装配<Caret $w={10} /></Select>
        <CmdBtn $on><Ico n="sel" s={16} /></CmdBtn>
        <CmdBtn $w={26}><Ico n="gDot" s={16} /></CmdBtn>
        <CmdBtn $w={20}><Ico n="funnel" s={17} /></CmdBtn>
        <Caret $w={16} />
        <CmdBtn $w={28}><Ico n="funnelG" s={16} /></CmdBtn>
        <CmdBtn $w={18}><Ico n="brkG" s={16} /></CmdBtn>
        <CmdBtn $w={30}><Ico n="boxPlus" s={17} /></CmdBtn>
        <CmdBtn $w={24}><Ico n="sqPlus" s={17} /></CmdBtn>
        <Caret $w={15} />
        <CmdBtn $w={26}><Ico n="shadeA" s={17} /></CmdBtn>
        <CmdBtn $on><Ico n="shadeB" s={17} /></CmdBtn>
        <QSep $m={7} />
        <CmdLabel>简单干涉</CmdLabel>
        <CmdBtn $w={22}><Ico n="refresh" s={17} /></CmdBtn>
        <CmdBtn $w={25}><Ico n="clash" s={17} /></CmdBtn>
        <CmdBtn $w={27}><Ico n="measure" s={17} /></CmdBtn>
        <CmdBtn><Ico n="lockS" s={17} /></CmdBtn>
        <CmdBtn $w={27}><Ico n="oSq" s={17} /></CmdBtn>
        <CmdBtn><Ico n="report" s={17} /></CmdBtn>
        <QSep $m={3} />
      </CmdBar>

      <Main>
        <Rail>
          {rail.map(([n, mt, active], i) => (
            <RailItem key={i} $mt={mt} $active={active} $head={i === 0}><Ico n={n} s={18} /></RailItem>
          ))}
        </Rail>
        <Nav>
          <NavHead>部件导航器<Ico n="maxW" s={15} /></NavHead>
          <Table>
            <Head>
              <HeadA>名称<SortUp /></HeadA>
              <HeadB>当前特</HeadB>
            </Head>
            {tree.map((it, i) => (
              <Row key={i} $odd={i % 2 === 1}>
                <RowMain>
                  {it.level === 0 ? (
                    <>
                      <Joint $w={18} $lineAt={9} $end={it.end}><Exp $minus={it.exp === "-"} /></Joint>
                      {it.icons.map((ic, k) => <RowIcon key={k} $w={it.icons.length === 1 ? 18 : 17}><Ico n={ic} s={16} /></RowIcon>)}
                      <RowText $ml={2}>{it.text}</RowText>
                    </>
                  ) : (
                    <>
                      <Joint $w={10} $ml={28} $lineAt={0} $end={it.end} />
                      {it.icons.map((ic, k) => <RowIcon key={k}><Ico n={ic} s={16} /></RowIcon>)}
                      <RowText $dim={it.dim} $bold={it.bold}>{it.text}</RowText>
                    </>
                  )}
                </RowMain>
                <RowSide>{it.side && <Ico n={it.side} s={14} />}</RowSide>
              </Row>
            ))}
            {emptyRows.map((i) => (
              <Row key={i} $odd={(i + tree.length) % 2 === 1}><RowMain /><RowSide /></Row>
            ))}
          </Table>
          <HScroll>‹<Thumb />›</HScroll>
          <SplitBar />
          <Accord>相关性<Chevron /></Accord>
          <Accord>细节<Chevron /></Accord>
        </Nav>
        <Strip>
          {strip.map(([n, mt], i) => <StripItem key={i} $mt={mt}><Ico n={n} s={25} /></StripItem>)}
          <StripSep />
        </Strip>
        <View>
          <DocBar>
            <DocTab><Ico n="flat" s={16} />19-32.prt<DocClose>✕</DocClose></DocTab>
          </DocBar>
          <Canvas><ModelScene /></Canvas>
        </View>
      </Main>

      <Dialog>
        <DlgTitle>燕秀错误提示:<Ico n="thinXW" s={13} /></DlgTitle>
        <DlgBody>
          <div>{"[  - 用于块 UI 样式编辑器对话框文件的文件扩展名 * 无效。使用 dlx 扩展名。 ]"}</div>
          <DlgGap />
          <div>{dash}</div>
          <div>{"[NX:1899.1700.0.0]    [YX:7.0.5.0]    [NET:4.8.03752]"}</div>
          <div>{"[Windows:Microsoft Windows 10 专业版。V:6.2.9200.0-x64]"}</div>
          <div>{dash}</div>
        </DlgBody>
        <DlgFoot><DlgBtn>确定</DlgBtn></DlgFoot>
      </Dialog>
    </Page>
  );
}
